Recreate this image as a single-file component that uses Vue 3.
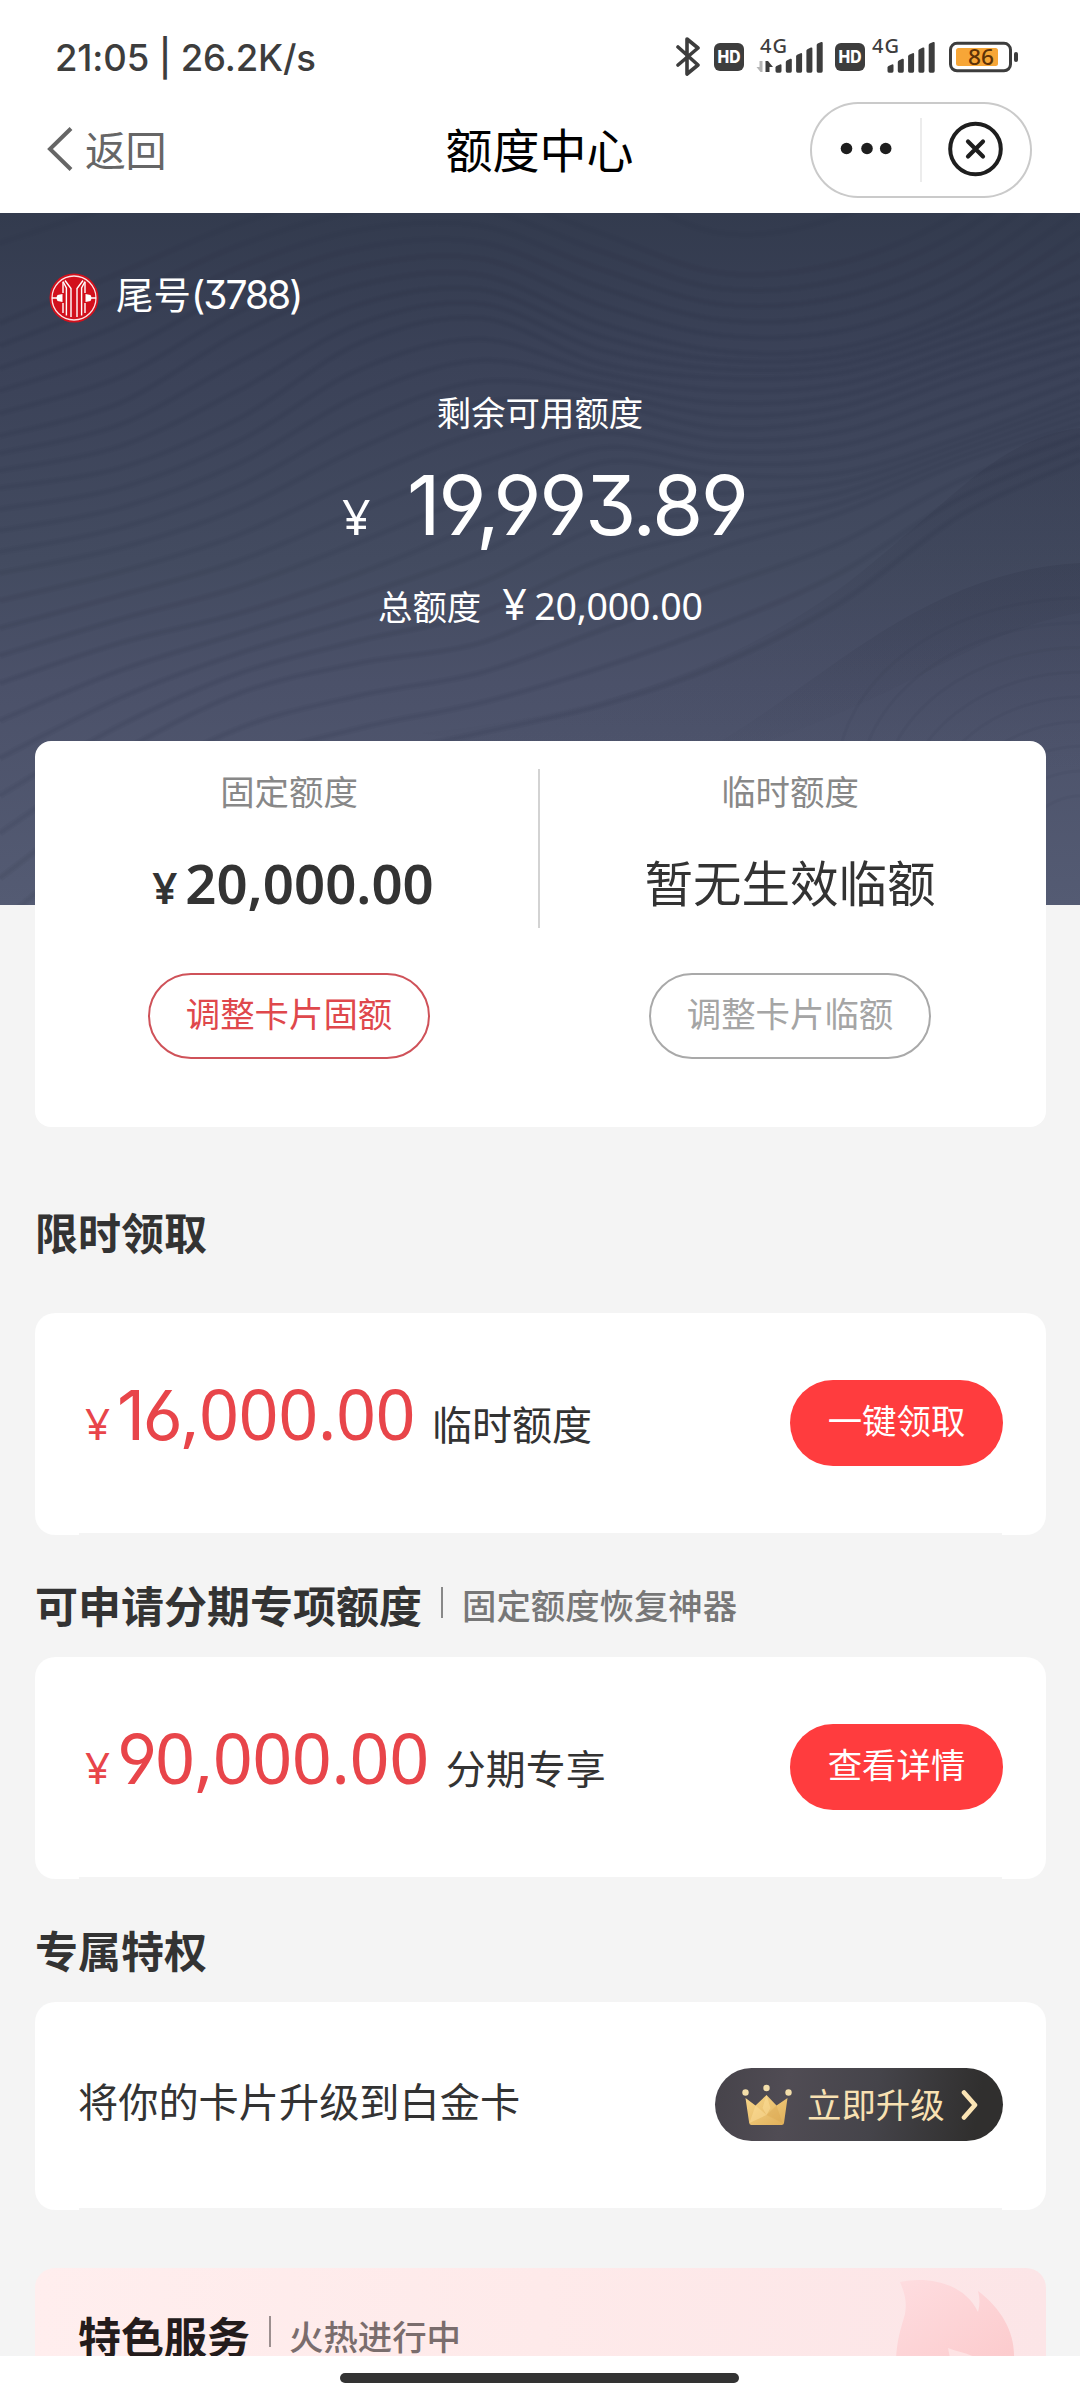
<script setup>
// Contour lines of the hero background, blended between hand-placed key curves
const keys = [
  [-130, -150, -190, -230, -200, -130, -60, -90, -180, -260],
  [110, 60, 10, -20, -20, 20, 60, 50, 0, -90],
  [223, 190, 120, 72, 62, 110, 138, 135, 95, 20],
  [275, 255, 205, 130, 105, 150, 165, 160, 125, 85],
  [360, 335, 295, 235, 190, 190, 215, 205, 165, 130],
  [470, 430, 400, 360, 310, 250, 262, 260, 225, 180],
  [620, 540, 480, 450, 430, 380, 335, 300, 250, 210],
  [800, 690, 620, 580, 550, 530, 490, 420, 320, 260],
]
const steps = [3, 5, 3, 4, 4, 4, 4]

function smooth(ys) {
  const pts = ys.map((y, i) => [i * 120, y])
  let d = `M${pts[0][0]} ${pts[0][1]}`
  for (let i = 0; i < pts.length - 1; i++) {
    const p0 = pts[Math.max(i - 1, 0)]
    const p1 = pts[i]
    const p2 = pts[i + 1]
    const p3 = pts[Math.min(i + 2, pts.length - 1)]
    const c = [
      p1[0] + (p2[0] - p0[0]) / 6, p1[1] + (p2[1] - p0[1]) / 6,
      p2[0] - (p3[0] - p1[0]) / 6, p2[1] - (p3[1] - p1[1]) / 6,
      p2[0], p2[1],
    ].map((n) => n.toFixed(1))
    d += `C${c.join(' ')}`
  }
  return d
}

const waves = []
keys.slice(0, -1).forEach((row, k) => {
  for (let s = 0; s < steps[k]; s++) {
    const t = s / steps[k]
    waves.push(smooth(row.map((y, i) => y + (keys[k + 1][i] - y) * t)))
  }
})
const rings = Array.from({ length: 9 }, (_, i) => ({ rx: 245 - i * 22, ry: 150 - i * 13 }))
const bars = [0, 1, 2, 3, 4]
const signals = [775.5, 887.5]

const offers = [
  { title: '限时领取', note: '', lead: '16', rest: ',000.00', label: '临时额度', action: '一键领取', cls: 'first' },
  { title: '可申请分期专项额度', note: '固定额度恢复神器', lead: '9', rest: '0,000.00', label: '分期专享', action: '查看详情', cls: 'second' },
]
</script>

<template>
  <div class="page">
    <header class="status">
      <span class="clock">21:05 | 26.2K/s</span>
      <svg class="status-icons" width="344" height="59" viewBox="676 20 344 59">
        <path d="M678 47l20 18-11 9V39l11 9-20 17" fill="none" stroke="#3d3d3d" stroke-width="3.6" stroke-linejoin="round" stroke-linecap="round" />
        <g v-for="x in [714, 835]" :key="x">
          <rect :x="x" y="43" width="30" height="28" rx="6" fill="#3d3d3d" />
          <text :x="x + 15" y="63" text-anchor="middle" class="hd" textLength="23" lengthAdjust="spacingAndGlyphs">HD</text>
        </g>
        <text x="760" y="53" class="net" textLength="27">4G</text>
        <text x="872" y="53" class="net" textLength="27">4G</text>
        <path d="M762.500 61v11h-2l-4-5h3v-6z" fill="#b5b5b5" />
        <path d="M765.500 72V61h2.500l5 6h-3.500v5z" fill="#3d3d3d" />
        <g v-for="s in signals" :key="s">
          <path v-for="b in bars" :key="b" :transform="`translate(${s + b * 10.3} 0)`" :d="`M0 ${67.500 - b * 5.6}q0-1 1-1.500l3.500-1.600q1.500-.4 1.500 1V71q0 1.800-1.500 1.800H1.500Q0 72.800 0 71z`" fill="#3d3d3d" />
        </g>
        <rect x="950.500" y="43.300" width="60" height="27.500" rx="6.500" fill="none" stroke="#3d3d3d" stroke-width="3" />
        <rect x="956" y="48" width="42" height="18" rx="2.500" fill="#f7a637" />
        <text x="968" y="65" class="level" textLength="26" lengthAdjust="spacingAndGlyphs">86</text>
        <rect x="1014" y="52" width="4" height="10" rx="2" fill="#3d3d3d" />
      </svg>
    </header>

    <nav class="nav">
      <div class="back">
        <svg width="28" height="46" viewBox="0 0 28 46"><path d="M26 2.500L5 23l21 20.500" fill="none" stroke="#666" stroke-width="4" /></svg>
        <span>返回</span>
      </div>
      <h1>额度中心</h1>
      <div class="capsule">
        <svg width="222" height="96" viewBox="0 0 222 96">
          <g fill="#1e1e1e"><circle cx="36.500" cy="46.500" r="5.800" /><circle cx="57" cy="46.500" r="5.800" /><circle cx="75.700" cy="46.500" r="5.800" /></g>
          <path d="M111 16v64" stroke="#e6e6e6" stroke-width="1.500" />
          <circle cx="165.500" cy="47" r="25.300" fill="none" stroke="#1e1e1e" stroke-width="4" />
          <path d="M158 39.500l15 15m0-15l-15 15" stroke="#1e1e1e" stroke-width="4.200" stroke-linecap="round" />
        </svg>
      </div>
    </nav>

    <section class="hero">
      <svg class="waves" width="1080" height="692" viewBox="0 0 1080 692">
        <defs>
          <linearGradient id="hill" x1="0" y1="0" x2="0" y2="1">
            <stop offset="0" stop-color="#2b3044" stop-opacity=".22" />
            <stop offset="1" stop-color="#2b3044" stop-opacity="0" />
          </linearGradient>
        </defs>
        <path d="M420 520C620 500 760 440 860 360S1000 225 1080 215V400C960 420 900 500 660 560z" fill="url(#hill)" />
        <path d="M660 560C800 500 900 360 1080 350V560H660z" fill="url(#hill)" />
        <g fill="none" stroke="#262c40">
          <g class="wide"><path v-for="(d, i) in waves" :key="i" :d="d" /></g>
          <g class="fine"><path v-for="(d, i) in waves" :key="i" :d="d" /></g>
          <g class="fine"><ellipse v-for="r in rings" :key="r.rx" cx="1082" :cy="700 - r.ry * .9" :rx="r.rx" :ry="r.ry + 30" /></g>
        </g>
      </svg>
      <div class="hero-body">
        <div class="bank">
          <svg width="50" height="50" viewBox="0 0 50 50">
            <circle cx="25" cy="25" r="24.500" fill="#d2101c" />
            <circle cx="25" cy="25" r="22" fill="none" stroke="#fbe3e4" stroke-width="1.300" />
            <g fill="none" stroke="#fff" stroke-width="1.400">
              <path d="M14 8.500l3.400 6.500v27.500M36 8.500l-3.400 6.500v27.500" />
              <path d="M16 7.500l6 8v28.500M34 7.500l-6 8v28.500" />
              <path d="M14 9v11M36 9v11M14 30v10M36 30v10" />
            </g>
            <path d="M3 24.300h4.500l1-2.300 5-1v8l-5-1-1-2.300H3zM47 24.300h-4.500l-1-2.300-5-1v8l5-1 1-2.300H47z" fill="#fff" />
          </svg>
          <span class="tail">尾号<span class="num">(3788)</span></span>
        </div>
        <p class="remain-label">剩余可用额度</p>
        <div class="remain"><span class="yen">¥</span><span class="num big">19,993.89</span></div>
        <div class="total"><span>总额度</span><span class="yen">¥</span><span class="slim">20,000.00</span></div>
      </div>
    </section>

    <main>
      <section class="limits">
        <div class="limit">
          <h2>固定额度</h2>
          <div class="value fixed"><span class="yen">¥</span><span class="slim">20,000.00</span></div>
          <button class="outline red">调整卡片固额</button>
        </div>
        <i class="divider"></i>
        <div class="limit">
          <h2>临时额度</h2>
          <div class="value">暂无生效临额</div>
          <button class="outline">调整卡片临额</button>
        </div>
      </section>

      <template v-for="o in offers" :key="o.title">
        <div class="heading" :class="o.cls">
          <h3>{{ o.title }}</h3>
          <template v-if="o.note"><i></i><span>{{ o.note }}</span></template>
        </div>
        <section class="card offer">
          <div class="price"><span class="yen">¥</span><span class="amount"><span class="num">{{ o.lead }}</span><span class="slim">{{ o.rest }}</span></span><span class="label">{{ o.label }}</span></div>
          <button class="solid">{{ o.action }}</button>
        </section>
      </template>

      <div class="heading third"><h3>专属特权</h3></div>
      <section class="card upgrade">
        <p>将你的卡片升级到白金卡</p>
        <button class="vip">
          <svg width="50" height="42" viewBox="0 0 50 42">
            <defs><linearGradient id="gold" x1="0" y1="0" x2="1" y2="1"><stop offset="0" stop-color="#f8d78b" /><stop offset="1" stop-color="#dfae58" /></linearGradient></defs>
            <path d="M3.500 14l10 7.500L24.500 11l10 10.500 11-7.500-3.500 25q-.3 2-2.300 2H9.500q-2 0-2.300-2z" fill="url(#gold)" />
            <path d="M24.500 11l-4 13 4 7 4-7zM13.500 21.500l11 9.500-17 8z" fill="#ffe2a0" opacity=".45" />
            <path d="M34.500 21.500l-10 9.500 16 8z" fill="#d7a24c" opacity=".35" />
            <g fill="#f3deaa"><circle cx="3.500" cy="8.500" r="3.200" /><circle cx="24.500" cy="4" r="3.200" /><circle cx="46.500" cy="8.500" r="3.200" /></g>
          </svg>
          <span>立即升级</span>
          <svg class="arrow" width="18" height="32" viewBox="0 0 18 32"><path d="M3 3.500l11 12.500L3 28.500" fill="none" stroke="#fbe4b4" stroke-width="4.600" stroke-linecap="round" stroke-linejoin="round" /></svg>
        </button>
      </section>

      <section class="service">
        <h3>特色服务</h3><i></i><span>火热进行中</span>
        <svg class="flame" width="120" height="90" viewBox="0 0 120 90">
          <defs><linearGradient id="fire" x1="0" y1="0" x2="1" y2="1"><stop offset="0" stop-color="#fedde0" /><stop offset="1" stop-color="#fccbcd" /></linearGradient></defs>
          <path d="M4 14C30 8 68 14 82 44c2-7 2-14 0-21 24 18 37 42 36 67H0C2 68 4 64 9 46 11 34 9 26 4 14z" fill="url(#fire)" />
          <path d="M52 80c10 4 20 5 28 10H54z" fill="#fde3e4" />
        </svg>
      </section>
    </main>

    <footer><i></i></footer>
  </div>
</template>

<style>
body { margin: 0; background: #f4f4f4; }
</style>

<style scoped>
.page {
  width: 1080px;
  height: 2400px;
  overflow: hidden;
  display: flex;
  flex-direction: column;
  background: #f4f4f4;
  color: #333;
  font-family: "Noto Sans CJK SC", sans-serif;
}
h1, h2, h3, p { margin: 0; font-weight: 400; }
button { font-family: inherit; border: 0; padding: 0; box-sizing: border-box; white-space: nowrap; }
svg { display: block; flex: none; }
i { display: block; flex: none; }
span { white-space: nowrap; }
.num { font-family: Inter, "Noto Sans", sans-serif; font-feature-settings: "ss01", "cv03", "cv04", "cv09"; }
.slim, .yen { font-family: "Noto Sans", sans-serif; }

.status {
  height: 100px;
  flex: none;
  background: #fff;
  display: flex;
  justify-content: space-between;
  padding: 0 60px 0 55px;
}
.clock { font: 500 36.500px/117px Inter, sans-serif; color: #3d3d3d; letter-spacing: -.15px; }
.status-icons { margin-top: 20px; }
.hd { font: 800 17px Inter, sans-serif; fill: #fff; }
.net { font: 500 20px "Noto Sans", sans-serif; fill: #3d3d3d; }
.level { font: 500 22px "Noto Sans", sans-serif; fill: #5e3207; }

.nav {
  height: 113px;
  flex: none;
  background: #fff;
  display: grid;
  grid-template-columns: 360px 360px 360px;
}
.back { display: flex; gap: 12px; padding: 26px 0 0 45px; color: #666; font-size: 41px; line-height: 46px; }
.back span { letter-spacing: -.5px; margin-top: -1px; }
.nav h1 { text-align: center; font-size: 47px; line-height: 95px; color: #000; margin-left: -1px; }
.capsule { width: 222px; height: 96px; margin: 2px 0 0 90px; box-sizing: border-box; border-radius: 48px; box-shadow: inset 0 0 0 2px #cacaca; }

.hero {
  height: 692px;
  flex: none;
  display: grid;
  overflow: hidden;
  color: #fff;
  background: linear-gradient(180deg, #333b4e 0, #3b4258 22%, #434b60 50%, #4b5169 68%, #545b73 100%);
}
.hero > * { grid-area: 1 / 1; }
.wide { stroke-width: 7; opacity: .06; }
.fine { stroke-width: 3; opacity: .06; }
.hero-body { display: flex; flex-direction: column; z-index: 1; }
.bank { display: flex; align-items: center; height: 50px; margin: 60px 0 0 49px; gap: 17px; }
.tail { font-size: 37.500px; line-height: 50px; margin-top: -8px; }
.tail .num { font-size: 39px; letter-spacing: -2px; }
.remain-label { text-align: center; font-size: 34.400px; line-height: 50px; margin-top: 63px; }
.remain { display: flex; align-items: baseline; height: 100px; line-height: 100px; margin: 19px 0 0 342px; }
.remain .yen { font-size: 50px; width: 65px; }
.remain .num { font-size: 83px; letter-spacing: -2.400px; }
.total { display: flex; align-items: baseline; line-height: 50px; margin: 24px 0 0 378px; font-size: 34.400px; }
.total .yen { font-size: 43px; margin-left: 21px; width: 32px; }
.total .slim { font-size: 37.500px; letter-spacing: -.2px; }

main { margin: -164px 34px 0 35px; position: relative; height: 1615px; flex: none; overflow: hidden; }
.limits { height: 386px; border-radius: 16px; background: #fff; display: flex; }
.limit { width: 503px; display: flex; flex-direction: column; align-items: center; box-sizing: border-box; padding: 24px 0 0 5px; }
.limit:last-child { padding: 24px 3px 0 0; }
.divider { width: 2px; height: 159px; background: #d3d3d3; margin-top: 28px; }
.limit h2 { font-size: 34.400px; line-height: 50px; color: #888; }
.value { font-size: 48.500px; line-height: 70px; height: 70px; margin: 31px 0 57px; }
.fixed { font-weight: 600; display: flex; align-items: baseline; margin: 33px 0 55px 8px; }
.fixed .yen { font-size: 44px; width: 33px; }
.fixed .slim { font-size: 54.500px; letter-spacing: 0; }
.outline { width: 282px; height: 86px; border: 2px solid #a9a9a9; border-radius: 43px; background: #fff; color: #a5a5a5; font-size: 34.400px; line-height: 74px; padding-bottom: 8px; }
.outline.red { border-color: #cf5259; color: #df484c; }

.heading { display: flex; align-items: center; height: 60px; font-weight: 500; }
.heading h3 { font-size: 43px; line-height: 60px; font-weight: 600; }
.heading i { width: 2px; height: 31px; background: #888; margin: -4px 19px 0; }
.heading span { font-size: 34.400px; color: #777; }
.first { margin: 74px 0 52px; }
.second { margin: 39px 0 23px; }
.third { margin: 40px 0 23px; }
.card {
  background: linear-gradient(#f4f4f4, #f4f4f4) center bottom / 923px 2px no-repeat, #fff;
  border-radius: 20px;
  display: flex;
  justify-content: space-between;
  box-sizing: border-box;
  padding-right: 43px;
}
.offer { height: 222px; align-items: center; padding-bottom: 2px; }
.price { display: flex; align-items: baseline; line-height: 80px; margin: 0 0 0 50px; color: #e8454a; }
.price .yen { font-size: 44px; width: 32px; }
.amount .num { font-size: 69px; letter-spacing: -2.200px; }
.amount .slim { font-size: 70px; letter-spacing: -.5px; }
.price .label { font-size: 40px; color: #333; margin-left: 17px; }
.solid { width: 213px; height: 86px; border-radius: 43px; background: #ff3c3e; color: #fff; font-size: 34.400px; line-height: 78px; padding-bottom: 8px; }

.upgrade { height: 208px; }
.upgrade p { font-size: 40.200px; line-height: 60px; margin: 68px 0 0 43px; }
.vip { width: 288px; height: 73px; margin-top: 66px; border-radius: 37px; background: linear-gradient(100deg, #46434a 0, #504c54 25%, #45444a 55%, #302f2e 90%); color: #f8e1b2; display: flex; align-items: center; padding-left: 27px; }
.vip span { font-size: 34.400px; line-height: 70px; margin: -3px 16px 0 15px; }
.service { height: 120px; margin-top: 58px; border-radius: 20px; background: linear-gradient(90deg, #ffeeee, #feeaea 50%, #fce5e7); display: flex; align-items: flex-start; position: relative; }
.service h3 { font-size: 43px; line-height: 60px; font-weight: 700; color: #241c1c; margin: 37px 0 0 43px; }
.service i { width: 2px; height: 31px; background: #9c8f8f; margin: 48px 18px 0 19px; }
.service span { font-size: 34.400px; line-height: 50px; font-weight: 500; color: #7a6d6d; margin-top: 42px; }
.flame { position: absolute; left: 861px; top: 0; }
footer { flex: 1; background: #fff; z-index: 1; }
footer i { width: 399px; height: 10px; border-radius: 5px; background: #333; margin: 17px 0 0 340px; }
</style>
